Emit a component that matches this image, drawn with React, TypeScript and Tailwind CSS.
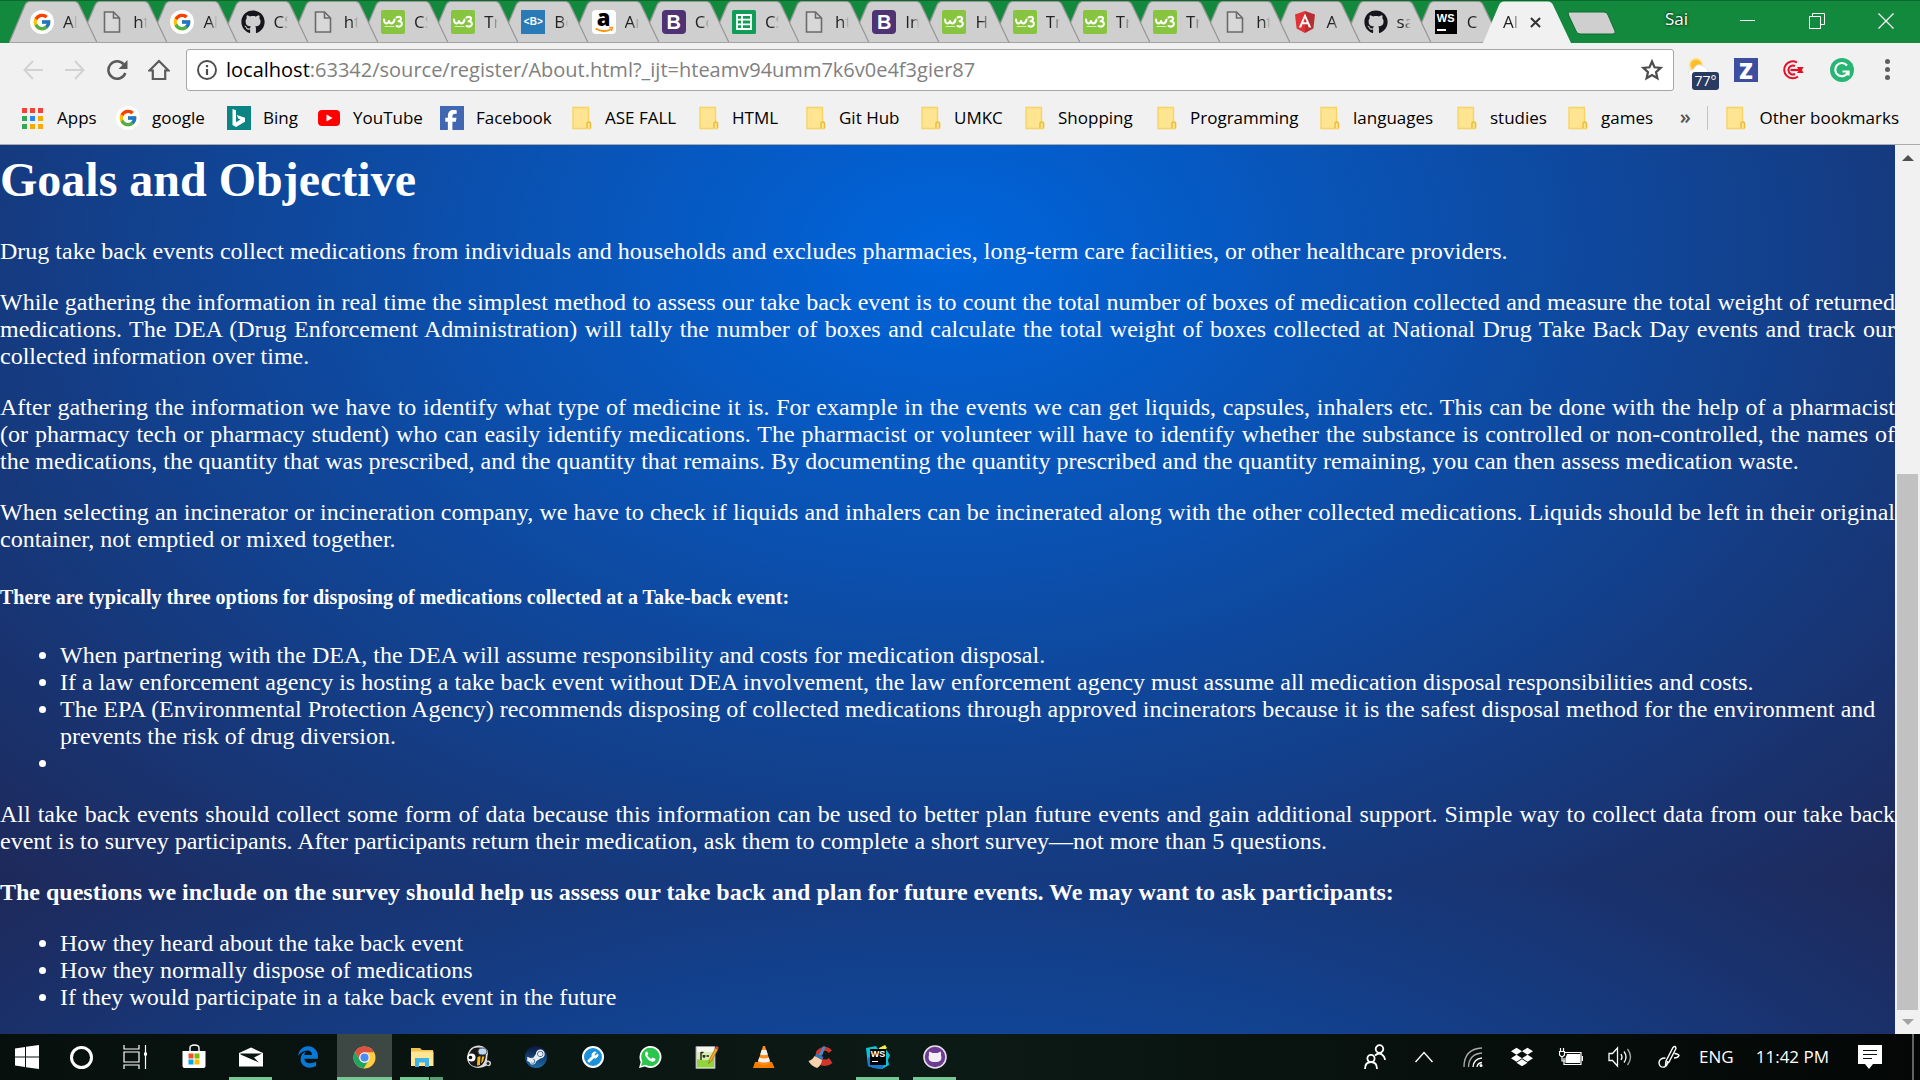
import React from "react";
import { FcGoogle } from "react-icons/fc";
import { FaGithub, FaSteamSymbol, FaDropbox, FaEdgeLegacy, FaAngular, FaFacebookF } from "react-icons/fa6";
import { Wrench } from "lucide-react";

/* ---------- site icons ---------- */

const Google = () => (
  <span className="flex size-6 items-center justify-center rounded-full bg-white">
    <FcGoogle size={20} />
  </span>
);

const Doc = () => (
  <svg viewBox="0 0 24 24" className="size-6" fill="#d8d8d8" stroke="#6b6b6b" strokeWidth="1.6">
    <path d="M4.5 2h9l6 6v14h-15z" />
    <path d="M13.5 2v6h6" fill="none" />
  </svg>
);

const W3 = () => (
  <span className="flex size-6 items-center justify-center rounded-[2px] bg-[#87c540]">
    <svg viewBox="0 0 24 24" className="size-6" fill="none" stroke="#fff" strokeLinecap="round" strokeLinejoin="round">
      <path d="M3 9.500q.3 3.800 2.300 4 2 0 2.700-2.500.7 2.500 2.500 2.500 2.500-.5 3-4" strokeWidth="2" />
      <path d="M15.500 7.500q3.500-1.500 4.500.5.500 2.300-2.500 3.200 4 .3 3.300 3.500-1.300 3-5.300 1.300" strokeWidth="2" />
      <path d="M4 16.500h9" stroke="#d8ecc0" strokeWidth="1" />
    </svg>
  </span>
);

const BracketB = () => (
  <span className="flex h-6 w-6 items-center justify-center bg-[#2a7ab8]">
    <span className="font-['Liberation_Sans'] text-[10px] font-bold leading-none text-white">&lt;B&gt;</span>
  </span>
);

const Amazon = () => (
  <span className="relative flex size-6 justify-center rounded bg-white">
    <span className="font-['Open_Sans'] text-[22px] font-extrabold leading-[15px] text-black">a</span>
    <svg viewBox="0 0 24 24" className="absolute inset-0 size-6" fill="none" stroke="#f79a1c" strokeWidth="2">
      <path d="M3.500 18.500q8 5 16 .5" />
      <path d="M17 17.500h3.500l-1 3.500" strokeWidth="1.400" />
    </svg>
  </span>
);

const Bootstrap = () => (
  <span className="flex size-6 items-center justify-center rounded bg-[#4f3273]">
    <span className="font-['Liberation_Sans'] text-[20px] font-bold leading-none text-white">B</span>
  </span>
);

const Sheets = () => (
  <svg viewBox="0 0 24 24" className="size-6">
    <rect width="24" height="24" rx="1.500" fill="#109d58" />
    <path d="M5 5h14v14H5zM5 9.700h14M5 14.300h14M10 5v14" fill="none" stroke="#fff" strokeWidth="1.800" />
  </svg>
);

const Angular = () => (
  <svg viewBox="0 0 22 24" className="h-6 w-[22px]">
    <path d="M11 1l10 3.500-1.600 14L11 23z" fill="#b52e31" />
    <path d="M11 1L1 4.500l1.600 14L11 23z" fill="#e23237" />
    <path d="M11 3.500L4.800 17.500h2.400l1.200-3.200h5.200l1.200 3.200h2.400zM11 8l1.800 4.300H9.200z" fill="#fff" fillRule="evenodd" />
  </svg>
);
const Github = () => <FaGithub size={24} color="#17141a" />;

const WebStorm = () => (
  <span className="flex h-6 w-[22px] flex-col items-start bg-black pl-[2px] pt-[2px]">
    <span className="font-['Liberation_Sans'] text-[11px] font-bold leading-[13px] text-white">WS</span>
    <span className="mt-[4px] h-[2px] w-[9px] bg-white" />
  </span>
);

type Tab = { icon: () => React.JSX.Element; text: string };

const tabs: Tab[] = [
  { icon: Google, text: "Al" },
  { icon: Doc, text: "ht" },
  { icon: Google, text: "Al" },
  { icon: Github, text: "CS" },
  { icon: Doc, text: "ht" },
  { icon: W3, text: "CS" },
  { icon: W3, text: "Tr" },
  { icon: BracketB, text: "Bo" },
  { icon: Amazon, text: "Ar" },
  { icon: Bootstrap, text: "Co" },
  { icon: Sheets, text: "CS" },
  { icon: Doc, text: "ht" },
  { icon: Bootstrap, text: "In" },
  { icon: W3, text: "H" },
  { icon: W3, text: "Tr" },
  { icon: W3, text: "Tr" },
  { icon: W3, text: "Tr" },
  { icon: Doc, text: "ht" },
  { icon: Angular, text: "A" },
  { icon: Github, text: "sa" },
  { icon: WebStorm, text: "C" },
];

function TabShape({ active }: { active?: boolean }) {
  return (
    <svg viewBox="0 0 88 42" preserveAspectRatio="none" className="absolute inset-0 h-full w-full">
      <path
        d="M0 42L16 4Q17.500 .5 21 .5H65Q68.500 .5 70 4L88 42"
        fill={active ? "#f1f1f1" : "#cfcfcf"}
        stroke={active ? "none" : "#959595"}
        strokeWidth="1.200"
      />
      {!active && <path d="M0 41.500H88" stroke="#a3a3a3" />}
    </svg>
  );
}

function TabStrip() {
  return (
    <header className="flex h-[43px] items-end border-t border-[#0b6a2b] bg-[#12893c]">
      <ul className="isolate ml-[9px] flex min-w-0 grow-[1475] basis-0">
        {tabs.map((tab, i) => {
          const Icon = tab.icon;
          return (
            <li key={i} className="relative h-[42px] min-w-0 flex-1" style={{ zIndex: tabs.length - i }}>
              <button type="button" className="relative flex h-full w-[calc(100%+18px)] items-center pl-[21px]">
                <TabShape />
                <span className="relative flex w-6 shrink-0 justify-center">
                  <Icon />
                </span>
                <span className="relative ml-[9px] w-[14px] overflow-hidden whitespace-nowrap text-left text-[17px] leading-6 text-[#222] [mask-image:linear-gradient(to_right,#000_50%,transparent)]">
                  {tab.text}
                </span>
              </button>
            </li>
          );
        })}
      </ul>
      <div className="relative z-10 flex h-[42px] w-[88px] shrink-0 items-center pl-[20px]">
        <TabShape active />
        <span className="relative w-[16px] overflow-hidden whitespace-nowrap text-[17px] leading-6 text-[#222] [mask-image:linear-gradient(to_right,#000_60%,transparent)]">
          Al
        </span>
        <button type="button" aria-label="Close tab" className="relative ml-[9px] flex size-4 items-center justify-center">
          <svg viewBox="0 0 12 12" className="size-[11px]" stroke="#333" strokeWidth="2.200">
            <path d="M1 1l10 10M11 1L1 11" />
          </svg>
        </button>
      </div>
      <button type="button" aria-label="New tab" className="-ml-[4px] mb-[8px] h-6 w-[50px] shrink-0">
        <svg viewBox="0 0 50 24" className="h-6 w-[50px]" fill="#cfcfcf" stroke="#0d6b2e" strokeWidth="1">
          <path d="M2 1h35q3 0 4 3l7 16q1 3-2 3H13q-3 0-4-3L1.500 4Q.5 1 2 1z" />
        </svg>
      </button>
      <div className="flex h-full shrink-0 items-start text-white">
        <span className="mr-[25px] ml-[48px] mt-[6px] text-[17px] leading-6 [text-shadow:0_0_3px_#000]">Sai</span>
        <button type="button" aria-label="Minimize" className="flex h-[39px] w-[69px] items-center justify-center">
          <span className="h-px w-[15px] bg-white" />
        </button>
        <button type="button" aria-label="Restore" className="flex h-[39px] w-[69px] items-center justify-center">
          <svg viewBox="0 0 16 16" className="size-4" fill="none" stroke="#fff">
            <path d="M.5 3.500h11v12H.5zM3.500 3.500V.5h12v11h-4" />
          </svg>
        </button>
        <button type="button" aria-label="Close" className="flex h-[39px] w-[69px] items-center justify-center">
          <svg viewBox="0 0 16 16" className="size-4" fill="none" stroke="#fff" strokeWidth="1.200">
            <path d="M.5 .5l15 15M15.500 .5l-15 15" />
          </svg>
        </button>
      </div>
    </header>
  );
}

/* ---------- toolbar ---------- */

function NavButton({ label, children }: { label: string; children: React.ReactNode }) {
  return (
    <button type="button" aria-label={label} className="flex h-9 w-[42px] items-center justify-center">
      {children}
    </button>
  );
}

function Toolbar() {
  return (
    <div className="flex h-[53px] items-center">
      <nav className="ml-3 flex w-[174px] shrink-0">
        <NavButton label="Back">
          <svg viewBox="0 0 20 20" className="size-5" fill="none" stroke="#d2d2d2" strokeWidth="2">
            <path d="M20 10H2M10 1L1.500 10l8.500 9" />
          </svg>
        </NavButton>
        <NavButton label="Forward">
          <svg viewBox="0 0 20 20" className="size-5" fill="none" stroke="#d2d2d2" strokeWidth="2">
            <path d="M0 10h18M10 1l8.500 9-8.500 9" />
          </svg>
        </NavButton>
        <NavButton label="Reload">
          <svg viewBox="0 0 22 22" className="size-[22px]" fill="none" stroke="#5a5a5a" strokeWidth="2.500">
            <path d="M17.800 5.500A8.700 8.700 0 1 0 19.300 14" />
            <path d="M21.500 1v9h-9z" fill="#5a5a5a" stroke="none" />
          </svg>
        </NavButton>
        <NavButton label="Home">
          <svg viewBox="0 0 22 22" className="size-[22px]" fill="none" stroke="#5a5a5a" strokeWidth="2.200">
            <path d="M1.500 11.500L11 2l9.500 9.500h-3.300V20H4.800v-8.500z" />
          </svg>
        </NavButton>
      </nav>
      <div className="flex h-[42px] min-w-0 flex-1 items-center rounded-[3px] border border-[#a6a6a6] bg-white px-[10px]">
        <svg viewBox="0 0 20 20" className="size-5 shrink-0" fill="none" stroke="#4d4d4d" strokeWidth="1.900">
          <circle cx="10" cy="10" r="9" />
          <path d="M10 9v6M10 5v2.200" strokeWidth="2.200" />
        </svg>
        <div className="ml-[9px] flex h-8 min-w-0 flex-1 items-center text-[20px] leading-8">
          <label htmlFor="address" className="text-black">
            localhost
          </label>
          <input
            id="address"
            readOnly
            defaultValue=":63342/source/register/About.html?_ijt=hteamv94umm7k6v0e4f3gier87"
            className="h-full min-w-0 flex-1 bg-transparent text-[#808080] outline-none"
          />
        </div>
        <button type="button" aria-label="Bookmark this page" className="shrink-0">
          <svg viewBox="0 0 22 22" className="size-[22px]" fill="none" stroke="#4d4d4d" strokeWidth="2.200">
            <path d="M11 2.500l2.500 5.800 6.200.6-4.700 4.200 1.400 6.200L11 16l-5.400 3.300L7 13.100 2.300 8.900l6.200-.6z" />
          </svg>
        </button>
      </div>
      <div className="flex shrink-0 items-center">
        <button type="button" aria-label="Weather" className="relative ml-[14px] h-8 w-8">
          <svg viewBox="0 0 32 32" className="size-8">
            <circle cx="8" cy="11" r="7" fill="#ffe08a" />
            <circle cx="8" cy="11" r="5.500" fill="#fdc02c" />
            <path d="M3 22q-4-1-2-5 2-2 4-1 4-8 10-4 5 2 6 9z" fill="#fff" stroke="#ddd" strokeWidth=".8" />
          </svg>
          <span className="absolute left-[4px] top-[18px] flex h-[18px] w-[27px] items-center justify-center rounded-[3px] bg-[#2a3b62] text-[14px] text-white">
            77°
          </span>
        </button>
        <button type="button" aria-label="Z extension" className="ml-[14px] flex size-6 items-center justify-center bg-[#3d4da0] text-[22px] font-extrabold leading-none text-white">
          Z
        </button>
        <button type="button" aria-label="Target extension" className="ml-6">
          <svg viewBox="0 0 22 22" className="size-[22px]" fill="none" stroke="#e01028" strokeWidth="2">
            <path d="M15 3.500A8.500 8.500 0 1 0 16 17.500M13 7A4.500 4.500 0 1 0 13 15" />
            <path d="M8.500 11h11" strokeWidth="2.200" />
            <path d="M15 8h6.500L20 11l1.500 3H15l2-3z" fill="#e01028" stroke="none" />
          </svg>
        </button>
        <button type="button" aria-label="Grammar extension" className="ml-[26px]">
          <svg viewBox="0 0 24 24" className="size-6" fill="none" stroke="#fff" strokeWidth="2.200">
            <circle cx="12" cy="12" r="12" fill="#27b573" stroke="none" />
            <path d="M17 7.500A6.600 6.600 0 1 0 18 14M12.500 13.500h6v4" />
          </svg>
        </button>
        <button type="button" aria-label="Menu" className="mr-[21px] ml-[21px] flex w-6 flex-col items-center gap-[3px]">
          <span className="size-[5px] rounded-full bg-[#5f5f5f]" />
          <span className="size-[5px] rounded-full bg-[#5f5f5f]" />
          <span className="size-[5px] rounded-full bg-[#5f5f5f]" />
        </button>
      </div>
    </div>
  );
}

/* ---------- bookmarks ---------- */

const Folder = () => (
  <svg viewBox="0 0 20 24" className="h-6 w-5" fill="#ffe591" stroke="#f8d462" strokeWidth="1.400">
    <path d="M1 1.500h15.500V16l2 1v5.500H1z" />
    <path d="M15 22v-5q1.800-2 3.500 0v5" stroke="#e8bd3c" />
  </svg>
);

const appColours = ["#f44336", "#f44336", "#f44336", "#34a853", "#2a85f5", "#f9ab00", "#34a853", "#f9ab00", "#f9ab00"];

const Apps = () => (
  <span className="grid w-[21px] grid-cols-3 gap-[3px]">
    {appColours.map((c, i) => (
      <span key={i} className="size-[5px]" style={{ backgroundColor: c }} />
    ))}
  </span>
);

const Bing = () => (
  <svg viewBox="0 0 24 24" className="size-6">
    <rect width="24" height="24" fill="#0c8484" />
    <path d="M5.500 3l3.500 1.200v12l4.500-2.600-2.300-1-1.400-3.600 8.200 2.800v3.900L9 21l-3.500-2z" fill="#fff" />
  </svg>
);

const YouTube = () => (
  <svg viewBox="0 0 22 16" className="h-4 w-[22px]">
    <rect width="22" height="16" rx="4" fill="#f00" />
    <path d="M8.500 4.500v7l6-3.500z" fill="#fff" />
  </svg>
);

const Facebook = () => (
  <span className="flex size-6 items-end justify-end bg-[#4267b2] pr-[3px]">
    <FaFacebookF size={20} color="#fff" />
  </span>
);

const bookmarks = [
  { icon: Apps, text: "Apps", width: "w-[94px]", slot: "w-[35px]" },
  { icon: Google, text: "google", width: "w-[111px]", slot: "w-[36px]" },
  { icon: Bing, text: "Bing", width: "w-[91px]", slot: "w-[36px]" },
  { icon: YouTube, text: "YouTube", width: "w-[122px]", slot: "w-[35px]" },
  { icon: Facebook, text: "Facebook", width: "w-[132px]", slot: "w-[36px]" },
  { icon: Folder, text: "ASE FALL", width: "w-[127px]", slot: "w-[33px]" },
  { icon: Folder, text: "HTML", width: "w-[107px]", slot: "w-[33px]" },
  { icon: Folder, text: "Git Hub", width: "w-[115px]", slot: "w-[33px]" },
  { icon: Folder, text: "UMKC", width: "w-[104px]", slot: "w-[33px]" },
  { icon: Folder, text: "Shopping", width: "w-[132px]", slot: "w-[33px]" },
  { icon: Folder, text: "Programming", width: "w-[163px]", slot: "w-[33px]" },
  { icon: Folder, text: "languages", width: "w-[137px]", slot: "w-[33px]" },
  { icon: Folder, text: "studies", width: "w-[111px]", slot: "w-[33px]" },
  { icon: Folder, text: "games", width: "w-[100px]", slot: "w-[33px]" },
];

function Bookmarks() {
  return (
    <nav className="flex h-[49px] items-center border-b border-[#ababab] pb-1 pl-[22px] text-[17px] leading-6 text-black">
      {bookmarks.map(({ icon: Icon, text, width, slot }) => (
        <a key={text} href="#page" className={`flex items-center whitespace-nowrap ${width}`}>
          <span className={`shrink-0 ${slot}`}>
            <Icon />
          </span>
          {text}
        </a>
      ))}
      <button type="button" className="ml-auto w-[24px] pb-[2px] text-center text-[20px] font-semibold text-[#555]">
        »
      </button>
      <span className="ml-[10px] h-6 w-px bg-[#c4c4c4]" />
      <a href="#page" className="mr-[21px] ml-[18px] flex items-center whitespace-nowrap">
        <span className="w-[33px]">
          <Folder />
        </span>
        Other bookmarks
      </a>
    </nav>
  );
}

/* ---------- page ---------- */

function Article() {
  return (
    <article
      id="page"
      className="min-w-0 flex-1 bg-[radial-gradient(#0065dc,#1e295a)] bg-[length:100%_1257px] bg-[position:0_-523px] pb-[22px] pt-[7px] font-['Liberation_Serif',serif] text-2xl leading-[27px] text-white"
    >
      <h1 className="mb-[31px] text-5xl font-bold leading-[55px]">Goals and Objective</h1>
      <div className="flex flex-col gap-6 text-justify">
        <p>
          Drug take back events collect medications from individuals and households and excludes pharmacies, long-term
          care facilities, or other healthcare providers.
        </p>
        <p>
          While gathering the information in real time the simplest method to assess our take back event is to count the
          total number of boxes of medication collected and measure the total weight of returned medications. The DEA
          (Drug Enforcement Administration) will tally the number of boxes and calculate the total weight of boxes
          collected at National Drug Take Back Day events and track our collected information over time.
        </p>
        <p>
          After gathering the information we have to identify what type of medicine it is. For example in the events we
          can get liquids, capsules, inhalers etc. This can be done with the help of a pharmacist (or pharmacy tech or
          pharmacy student) who can easily identify medications. The pharmacist or volunteer will have to identify
          whether the substance is controlled or non-controlled, the names of the medications, the quantity that was
          prescribed, and the quantity that remains. By documenting the quantity prescribed and the quantity remaining,
          you can then assess medication waste.
        </p>
        <p>
          When selecting an incinerator or incineration company, we have to check if liquids and inhalers can be
          incinerated along with the other collected medications. Liquids should be left in their original container, not
          emptied or mixed together.
        </p>
      </div>
      <h5 className="my-[33px] text-[20px] font-bold leading-[23px]">
        There are typically three options for disposing of medications collected at a Take-back event:
      </h5>
      <ul className="list-disc pl-[60px]">
        <li>When partnering with the DEA, the DEA will assume responsibility and costs for medication disposal.</li>
        <li>
          If a law enforcement agency is hosting a take back event without DEA involvement, the law enforcement agency
          must assume all medication disposal responsibilities and costs.
        </li>
        <li>
          The EPA (Environmental Protection Agency) recommends disposing of collected medications through approved
          incinerators because it is the safest disposal method for the environment and prevents the risk of drug
          diversion.
        </li>
        <li className="min-h-[27px]" />
      </ul>
      <p className="my-6 text-justify">
        All take back events should collect some form of data because this information can be used to better plan future
        events and gain additional support. Simple way to collect data from our take back event is to survey
        participants. After participants return their medication, ask them to complete a short survey—not more than 5
        questions.
      </p>
      <p className="my-6 font-bold">
        The questions we include on the survey should help us assess our take back and plan for future events. We may want
        to ask participants:
      </p>
      <ul className="list-disc pl-[60px]">
        <li>How they heard about the take back event</li>
        <li>How they normally dispose of medications</li>
        <li>If they would participate in a take back event in the future</li>
      </ul>
    </article>
  );
}

function Scrollbar() {
  return (
    <div className="flex w-[25px] shrink-0 flex-col items-center bg-[#f1f1f1]">
      <button type="button" aria-label="Scroll up" className="flex h-[25px] w-full items-center justify-center">
        <svg viewBox="0 0 12 6" className="h-[6px] w-3" fill="#505050">
          <path d="M0 6l6-6 6 6z" />
        </svg>
      </button>
      <div className="flex w-[21px] flex-1 flex-col">
        <div className="grow-[304]" />
        <div className="grow-[536] bg-[#c1c1c1]" />
      </div>
      <button type="button" aria-label="Scroll down" className="flex h-6 w-full items-center justify-center">
        <svg viewBox="0 0 12 6" className="h-[6px] w-3" fill="#a3a3a3">
          <path d="M0 0h12L6 6z" />
        </svg>
      </button>
    </div>
  );
}

/* ---------- taskbar ---------- */

const apps: { label: string; icon: React.ReactNode; state?: "open" | "active" | "stack" }[] = [
  {
    label: "Store",
    icon: (
      <svg viewBox="0 0 24 26" className="h-[26px] w-6">
        <path d="M8 8V4q0-3 4.500-3T17 4v4" fill="none" stroke="#fff" strokeWidth="1.400" />
        <path d="M.5 7h23v15q0 2-2 2h-19q-2 0-2-2z" fill="#fff" />
        <path d="M6.500 9.500h5v5h-5z" fill="#f25022" />
        <path d="M12.500 9.500h5v5h-5z" fill="#7fba00" />
        <path d="M6.500 15.500h5v5h-5z" fill="#00a4ef" />
        <path d="M12.500 15.500h5v5h-5z" fill="#ffb900" />
      </svg>
    ),
  },
  {
    label: "Mail",
    state: "open",
    icon: (
      <svg viewBox="0 0 24 20" className="h-5 w-6">
        <path d="M0 6L12 .5 24 6v13.500H0z" fill="#fff" />
        <path d="M1.500 6.500h21.500l-8 4 5 5L1.500 7.500z" fill="#0a1411" />
      </svg>
    ),
  },
  { label: "Edge", icon: <FaEdgeLegacy size={22} color="#0878d7" /> },
  {
    label: "Chrome",
    state: "active",
    icon: (
      <svg viewBox="0 0 24 24" className="size-[23px]">
        <circle cx="12" cy="12" r="11.500" fill="#ffcd40" />
        <path d="M2 6.200A11.500 11.500 0 0 1 22 6.500H12a5.500 5.500 0 0 0-5.200 7.300z" fill="#dd5144" />
        <path d="M2 6.200A11.500 11.500 0 0 0 11 23.400l4.800-7.600A5.500 5.500 0 0 1 6.800 14z" fill="#1fa463" />
        <circle cx="12" cy="12" r="5.500" fill="#f1f1f1" />
        <circle cx="12" cy="12" r="4.200" fill="#4c8bf5" />
      </svg>
    ),
  },
  {
    label: "File Explorer",
    state: "stack",
    icon: (
      <svg viewBox="0 0 24 20" className="h-5 w-6">
        <path d="M1 1h9l2 2h11v16H1z" fill="#f2c14e" />
        <path d="M1 4.500h22.500V19H1z" fill="#ffe694" />
        <path d="M5 20v-9h14v9h-4v-4.500H9V20z" fill="#3fb3ea" />
      </svg>
    ),
  },
  {
    label: "Bee",
    icon: (
      <svg viewBox="0 0 26 24" className="h-6 w-[26px]">
        <path d="M8 1.500q7-3 12 2 3 2 1.500 7l-.5 5q4-.5 4 3-.5 4-4 2-6 3.500-12 2Q1 20 1 12 2 4 8 1.500z" fill="#ddd" />
        <path d="M8 3q9-2.500 12 5 0 11-7 13.500-8 1-10-5Q1 7 8 3z" fill="#171717" />
        <path d="M11.500 12l3-1-.5 9-3 .5zM16 11.500l2.500 0-1.500 5-2 2z" fill="#f5b815" />
        <circle cx="5.500" cy="12.500" r="4" fill="#fff" />
        <circle cx="4.500" cy="12.500" r="1.800" fill="#111" />
        <ellipse cx="16.500" cy="6.500" rx="4.500" ry="3.500" fill="#b9d9f7" stroke="#444" />
        <circle cx="22" cy="18.500" r="2" fill="#222" stroke="#ccc" />
      </svg>
    ),
  },
  {
    label: "Steam",
    icon: (
      <span className="flex size-[22px] items-center justify-center rounded-full bg-linear-to-b from-[#0b1640] to-[#1b6ea8]">
        <FaSteamSymbol size={20} color="#e8edf2" />
      </span>
    ),
  },
  {
    label: "Support tool",
    icon: (
      <span className="flex size-[22px] items-center justify-center rounded-full border-2 border-white bg-[#1b8fd8]">
        <Wrench size={12} color="#fff" fill="#fff" strokeWidth={2} />
      </span>
    ),
  },
  {
    label: "WhatsApp",
    icon: (
      <svg viewBox="0 0 24 24" className="size-6">
        <path d="M1 23l1.700-6A11 11 0 1 1 7 21.500z" fill="#fff" />
        <path d="M3 21l1.400-4.600A9.200 9.200 0 1 1 7.500 19.700z" fill="#2bc44c" />
        <path d="M8.300 6.500q-1.800 1-1.300 3.200 1.800 5.200 7 7 2.500.5 3.400-1.700v-1.200l-2.800-1.400-1.400 1.500q-2.600-1-4-3.600l1.200-1.300-1.200-2.500z" fill="#fff" />
      </svg>
    ),
  },
  {
    label: "Notepad++",
    icon: (
      <svg viewBox="0 0 24 24" className="size-6">
        <path d="M1 1.500h19v22H1z" fill="#f7f7f0" stroke="#999" />
        <path d="M2 11h17v11.500H2z" fill="#8fd43a" />
        <path d="M2 7h17v6q-8 4-17 1z" fill="#d5efab" />
        <path d="M6 7v8M6 7.500h2.500M9 10v3M7.500 11h3M11.500 11h2.500" stroke="#222" strokeWidth="1.400" />
        <path d="M13.500 18.500l1-4 6-11.500 2.500 1.500-6.500 11.500z" fill="#f5a623" stroke="#8a5a12" strokeWidth=".6" />
        <path d="M20.500 3l1-2 2.300 1.300-.8 2.200z" fill="#d64545" />
      </svg>
    ),
  },
  {
    label: "VLC",
    icon: (
      <svg viewBox="0 0 24 24" className="size-6">
        <path d="M3 17h17l2.500 6H1z" fill="#f57c00" />
        <path d="M11 1h2l5.500 17q-6.500 4-13 0z" fill="#ff8d1a" />
        <path d="M9.600 5h4.800l1.400 4.500q-3.800 1.600-7.600 0zM7.200 12.500q4.800 2 9.600 0l1.200 3.700q-6 2.600-12 0z" fill="#f2f2f2" />
      </svg>
    ),
  },
  {
    label: "CCleaner",
    icon: (
      <svg viewBox="0 0 26 24" className="h-6 w-[26px]">
        <path d="M24 5.500Q20 1 14.500 2 7 4 7.500 12q1.500 9 9.500 9 4 0 7.500-3l-3.500-5q-4 3-7 0-2-5 2-7 3-1 4.500 2z" fill="#d2352b" />
        <path d="M15.500 1l2 .8-3.500 9-3-1.300z" fill="#3b8fd6" />
        <path d="M8.500 8.500l7 3.500-1.500 3-7-4z" fill="#2e76bd" />
        <path d="M6.500 11l7.500 4q-1 6-5 8Q3 21 .5 16q4-1 6-5z" fill="#f6d3ac" />
      </svg>
    ),
  },
  {
    label: "WebStorm",
    state: "open",
    icon: (
      <span className="relative flex size-6 items-center justify-center">
        <svg viewBox="0 0 24 24" className="absolute inset-0 size-6">
          <path d="M0 3l10-2 2 3 6-3 3 5 3 4-2 5 1 5-7 4-8-1-6-2z" fill="#07c3d6" />
          <path d="M13 3l6-3 2 3-7 6z" fill="#f8ee3c" />
          <path d="M2 12l18 6-4 6-8-1-6-2z" fill="#1778cf" />
        </svg>
        <span className="relative flex h-4 w-4 flex-col bg-black pl-px pt-px">
          <span className="font-['Liberation_Sans'] text-[9px] font-bold leading-[9px] text-white">WS</span>
          <span className="mt-[2px] ml-px h-px w-[6px] bg-white" />
        </span>
      </span>
    ),
  },
  {
    label: "GitHub Desktop",
    state: "open",
    icon: (
      <svg viewBox="0 0 24 24" className="size-6">
        <circle cx="12" cy="12" r="11" fill="#6e3b93" stroke="#e6e0ea" strokeWidth="1.600" />
        <path d="M6.500 6.500l3 1.500h5l3-1.500q1 1.500.5 3.500 1.500 5-2 6.500-4 1-8 0-3.500-1.500-2-6.500-.5-2 .5-3.500z" fill="#f3eef5" />
      </svg>
    ),
  },
];

function TaskApp({ label, icon, state }: (typeof apps)[number]) {
  return (
    <button
      type="button"
      aria-label={label}
      className={`relative flex h-[46px] w-[57px] items-center justify-center border-x border-transparent bg-clip-padding ${state === "active" ? "bg-[#3d4743]" : ""}`}
    >
      {icon}
      {state === "open" && <span className="absolute bottom-0 h-[3px] w-[43px] bg-[#76c794]" />}
      {state === "active" && <span className="absolute inset-x-0 bottom-0 h-[3px] bg-[#76c794]" />}
      {state === "stack" && (
        <span className="absolute bottom-0 flex h-[3px] w-[43px] gap-px">
          <span className="flex-1 bg-[#76c794]" />
          <span className="w-[13px] bg-[#5a9a73]" />
        </span>
      )}
    </button>
  );
}

function TrayButton({ label, children }: { label: string; children: React.ReactNode }) {
  return (
    <button type="button" aria-label={label} className="flex h-full w-[49px] items-center justify-center">
      {children}
    </button>
  );
}

function Taskbar() {
  return (
    <footer className="flex h-[46px] shrink-0 items-center bg-linear-to-r from-[#07100d] via-[#0c1a15] to-[#040706] text-white">
      <button type="button" aria-label="Start" className="flex h-full w-[54px] items-center justify-center">
        <svg viewBox="0 0 24 24" className="size-6" fill="#fff">
          <path d="M0 3.500L10 2v9.500H0zM11 1.800L24 0v11.500H11zM0 12.500h10V22L0 20.500zM11 12.500h13V24l-13-1.800z" />
        </svg>
      </button>
      <button type="button" aria-label="Cortana" className="flex h-full w-[54px] items-center justify-center">
        <span className="size-[23px] rounded-full border-[3px] border-white" />
      </button>
      <button type="button" aria-label="Task view" className="mr-[3px] flex h-full w-[54px] items-center justify-center">
        <svg viewBox="0 0 24 24" className="size-6" fill="none" stroke="#fff" strokeWidth="1.200">
          <path d="M1 0v4h15V0M1 7h15v10H1zM1 24v-4h15v4M22.500 0v24" />
          <path d="M21 7.500h3v3h-3z" fill="#fff" stroke="none" />
        </svg>
      </button>
      {apps.map((app) => (
        <TaskApp key={app.label} {...app} />
      ))}
      <div className="ml-auto flex h-full items-center">
        <TrayButton label="People">
          <svg viewBox="0 0 22 26" className="h-[26px] w-[22px]" fill="none" stroke="#fff" strokeWidth="1.800">
            <circle cx="15.500" cy="5" r="3.800" />
            <path d="M11 11.500q4.500-4 8 0 2 2 2 4.500" />
            <circle cx="7" cy="14.500" r="3.600" />
            <path d="M1 25q0-7 6-7t6 7" />
          </svg>
        </TrayButton>
        <TrayButton label="Show hidden icons">
          <svg viewBox="0 0 18 12" className="h-3 w-[18px]" fill="none" stroke="#fff" strokeWidth="1.400">
            <path d="M.5 11L9 1.500 17.500 11" />
          </svg>
        </TrayButton>
        <TrayButton label="Network">
          <svg viewBox="0 0 20 20" className="size-5" fill="none" stroke="#aaa" strokeWidth="1.300">
            <path d="M1 20Q1 2 19 1M5.500 20Q6 7 19 6" />
            <path d="M10 20q.5-8 9-9M14 20q.5-4 5-4.500" stroke="#fff" />
            <circle cx="18" cy="18.500" r="1.500" fill="#fff" stroke="none" />
          </svg>
        </TrayButton>
        <TrayButton label="Dropbox">
          <FaDropbox size={22} />
        </TrayButton>
        <TrayButton label="Battery">
          <svg viewBox="0 0 24 18" className="h-[18px] w-6" fill="none" stroke="#fff" strokeWidth="1.200">
            <path d="M6 4.500h16v12H5V10M23.500 8v5" />
            <path d="M8.500 6.500h12v8H7V10z" fill="#fff" />
            <path d="M1.500 0v3M4.500 0v3M.5 3.500h5V7L4 8.500H2L.5 7zM3 8.500V13h3" />
          </svg>
        </TrayButton>
        <TrayButton label="Volume">
          <svg viewBox="0 0 24 22" className="h-[22px] w-6" fill="none" stroke="#fff" strokeWidth="1.300">
            <path d="M1 7.500h3.500l5-5.500v18l-5-5.500H1zM13 8q2 3 0 6M16 5.500q4 5.500 0 11" />
            <path d="M19.500 3q6 8 0 16" stroke="#aaa" />
          </svg>
        </TrayButton>
        <TrayButton label="Pen">
          <svg viewBox="0 0 22 24" className="h-6 w-[22px]" fill="none" stroke="#fff" strokeWidth="1.400">
            <path d="M8 16L15 2.500q2.500-2.500 3 1L11 17l-3.500 3zM7.500 13Q1 13 1 18q.5 5 5.500 4 3.500-2 3-6M16.500 8.500q4 .5 4.500 2-1 2.500-5 2.500" />
          </svg>
        </TrayButton>
        <button type="button" className="ml-[6px] h-full text-[17px]">
          ENG
        </button>
        <button type="button" className="ml-[22px] h-full text-[17px]">
          11:42 PM
        </button>
        <button type="button" aria-label="Notifications" className="ml-[29px] flex h-full items-center">
          <svg viewBox="0 0 24 24" className="size-6">
            <path d="M0 0h24v19H15l-4 5-4-5H0z" fill="#fff" />
            <path d="M5 5.500h14M5 9.500h14M5 13.500h9" stroke="#0a1210" strokeWidth="1.200" />
          </svg>
        </button>
        <span className="mr-[6px] ml-[30px] h-full w-[2px] bg-[#5f6361]" />
      </div>
    </footer>
  );
}

export default function App() {
  return (
    <div className="flex min-h-screen flex-col bg-[#f1f1f1] font-['Open_Sans',sans-serif]">
      <TabStrip />
      <Toolbar />
      <Bookmarks />
      <main className="flex flex-1">
        <Article />
        <Scrollbar />
      </main>
      <Taskbar />
    </div>
  );
}
